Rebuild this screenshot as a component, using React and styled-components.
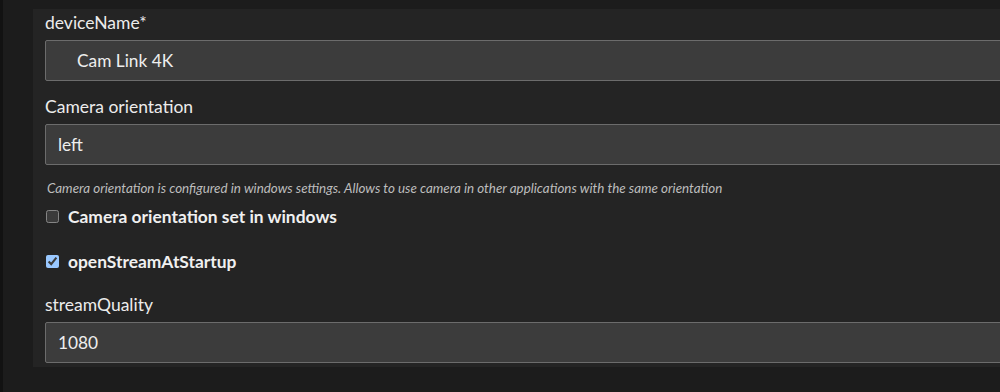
import React, { useState } from 'react'
import styled, { createGlobalStyle } from 'styled-components'

const Global = createGlobalStyle`
  html, body {
    margin: 0;
    padding: 0;
    background: #1c1c1c;
    color-scheme: dark;
    overflow: hidden;
  }
  body {
    font-family: "Lato", "Open Sans", sans-serif;
    -webkit-font-smoothing: antialiased;
  }
`

const Page = styled.div`
  height: 392px;
  border-left: 3px solid #121212;
  padding: 9px 0 0 30px;
  box-sizing: border-box;
  overflow: hidden;
`

const Panel = styled.div`
  width: 1100px;
  background: #242424;
  padding: 2px 0 4px 12px;
  box-sizing: border-box;
`

const Field = styled.div`
  display: flex;
  flex-direction: column;
  margin-top: ${p => p.$top || 0}px;
  margin-bottom: ${p => p.$gap || 0}px;
`

const Label = styled.label`
  color: #ececec;
  font-size: 17.5px;
  line-height: 24px;
  margin-bottom: 5px;
`

const Input = styled.input`
  height: 41px;
  box-sizing: border-box;
  background: #3c3c3c;
  border: 1px solid #6c6c6c;
  border-radius: 2px;
  color: #eeeeee;
  font-family: inherit;
  font-size: 17.3px;
  padding: 0 0 0 ${p => p.$indent || 12}px;
  outline: none;
`

const Help = styled.div`
  margin-top: 15px;
  font-size: 13.4px;
  line-height: 16px;
  font-style: italic;
  color: #bdbdbd;
  padding-left: 2px;
`

const CheckRow = styled.label`
  display: flex;
  align-items: center;
  gap: 9px;
  height: 24px;
  margin-top: ${p => p.$top}px;
  color: #f0f0f0;
  font-size: 17.4px;
  font-weight: 700;
`

const Box = styled.input`
  width: 13px;
  height: 13px;
  margin: 0 0 0 1px;
`

export default function App() {
  const [vals, setVals] = useState({
    deviceName: 'Cam Link 4K',
    orientation: 'left',
    quality: '1080',
    setInWindows: false,
    openAtStartup: true,
  })
  const change = (e) => {
    const { name, type, checked, value } = e.target
    setVals({ ...vals, [name]: type === 'checkbox' ? checked : value })
  }

  return (
    <>
      <Global />
      <Page>
        <Panel>
          <Field $gap={14}>
            <Label>deviceName*</Label>
            <Input $indent={31} name="deviceName" value={vals.deviceName} onChange={change} />
          </Field>
          <Field>
            <Label>Camera orientation</Label>
            <Input name="orientation" value={vals.orientation} onChange={change} />
          </Field>
          <Help>
            Camera orientation is configured in windows settings. Allows to use camera in other applications with the same orientation
          </Help>
          <CheckRow $top={8}>
            <Box type="checkbox" name="setInWindows" checked={vals.setInWindows} onChange={change} />
            Camera orientation set in windows
          </CheckRow>
          <CheckRow $top={21}>
            <Box type="checkbox" name="openAtStartup" checked={vals.openAtStartup} onChange={change} />
            openStreamAtStartup
          </CheckRow>
          <Field $top={20}>
            <Label>streamQuality</Label>
            <Input name="quality" value={vals.quality} onChange={change} />
          </Field>
        </Panel>
      </Page>
    </>
  )
}
